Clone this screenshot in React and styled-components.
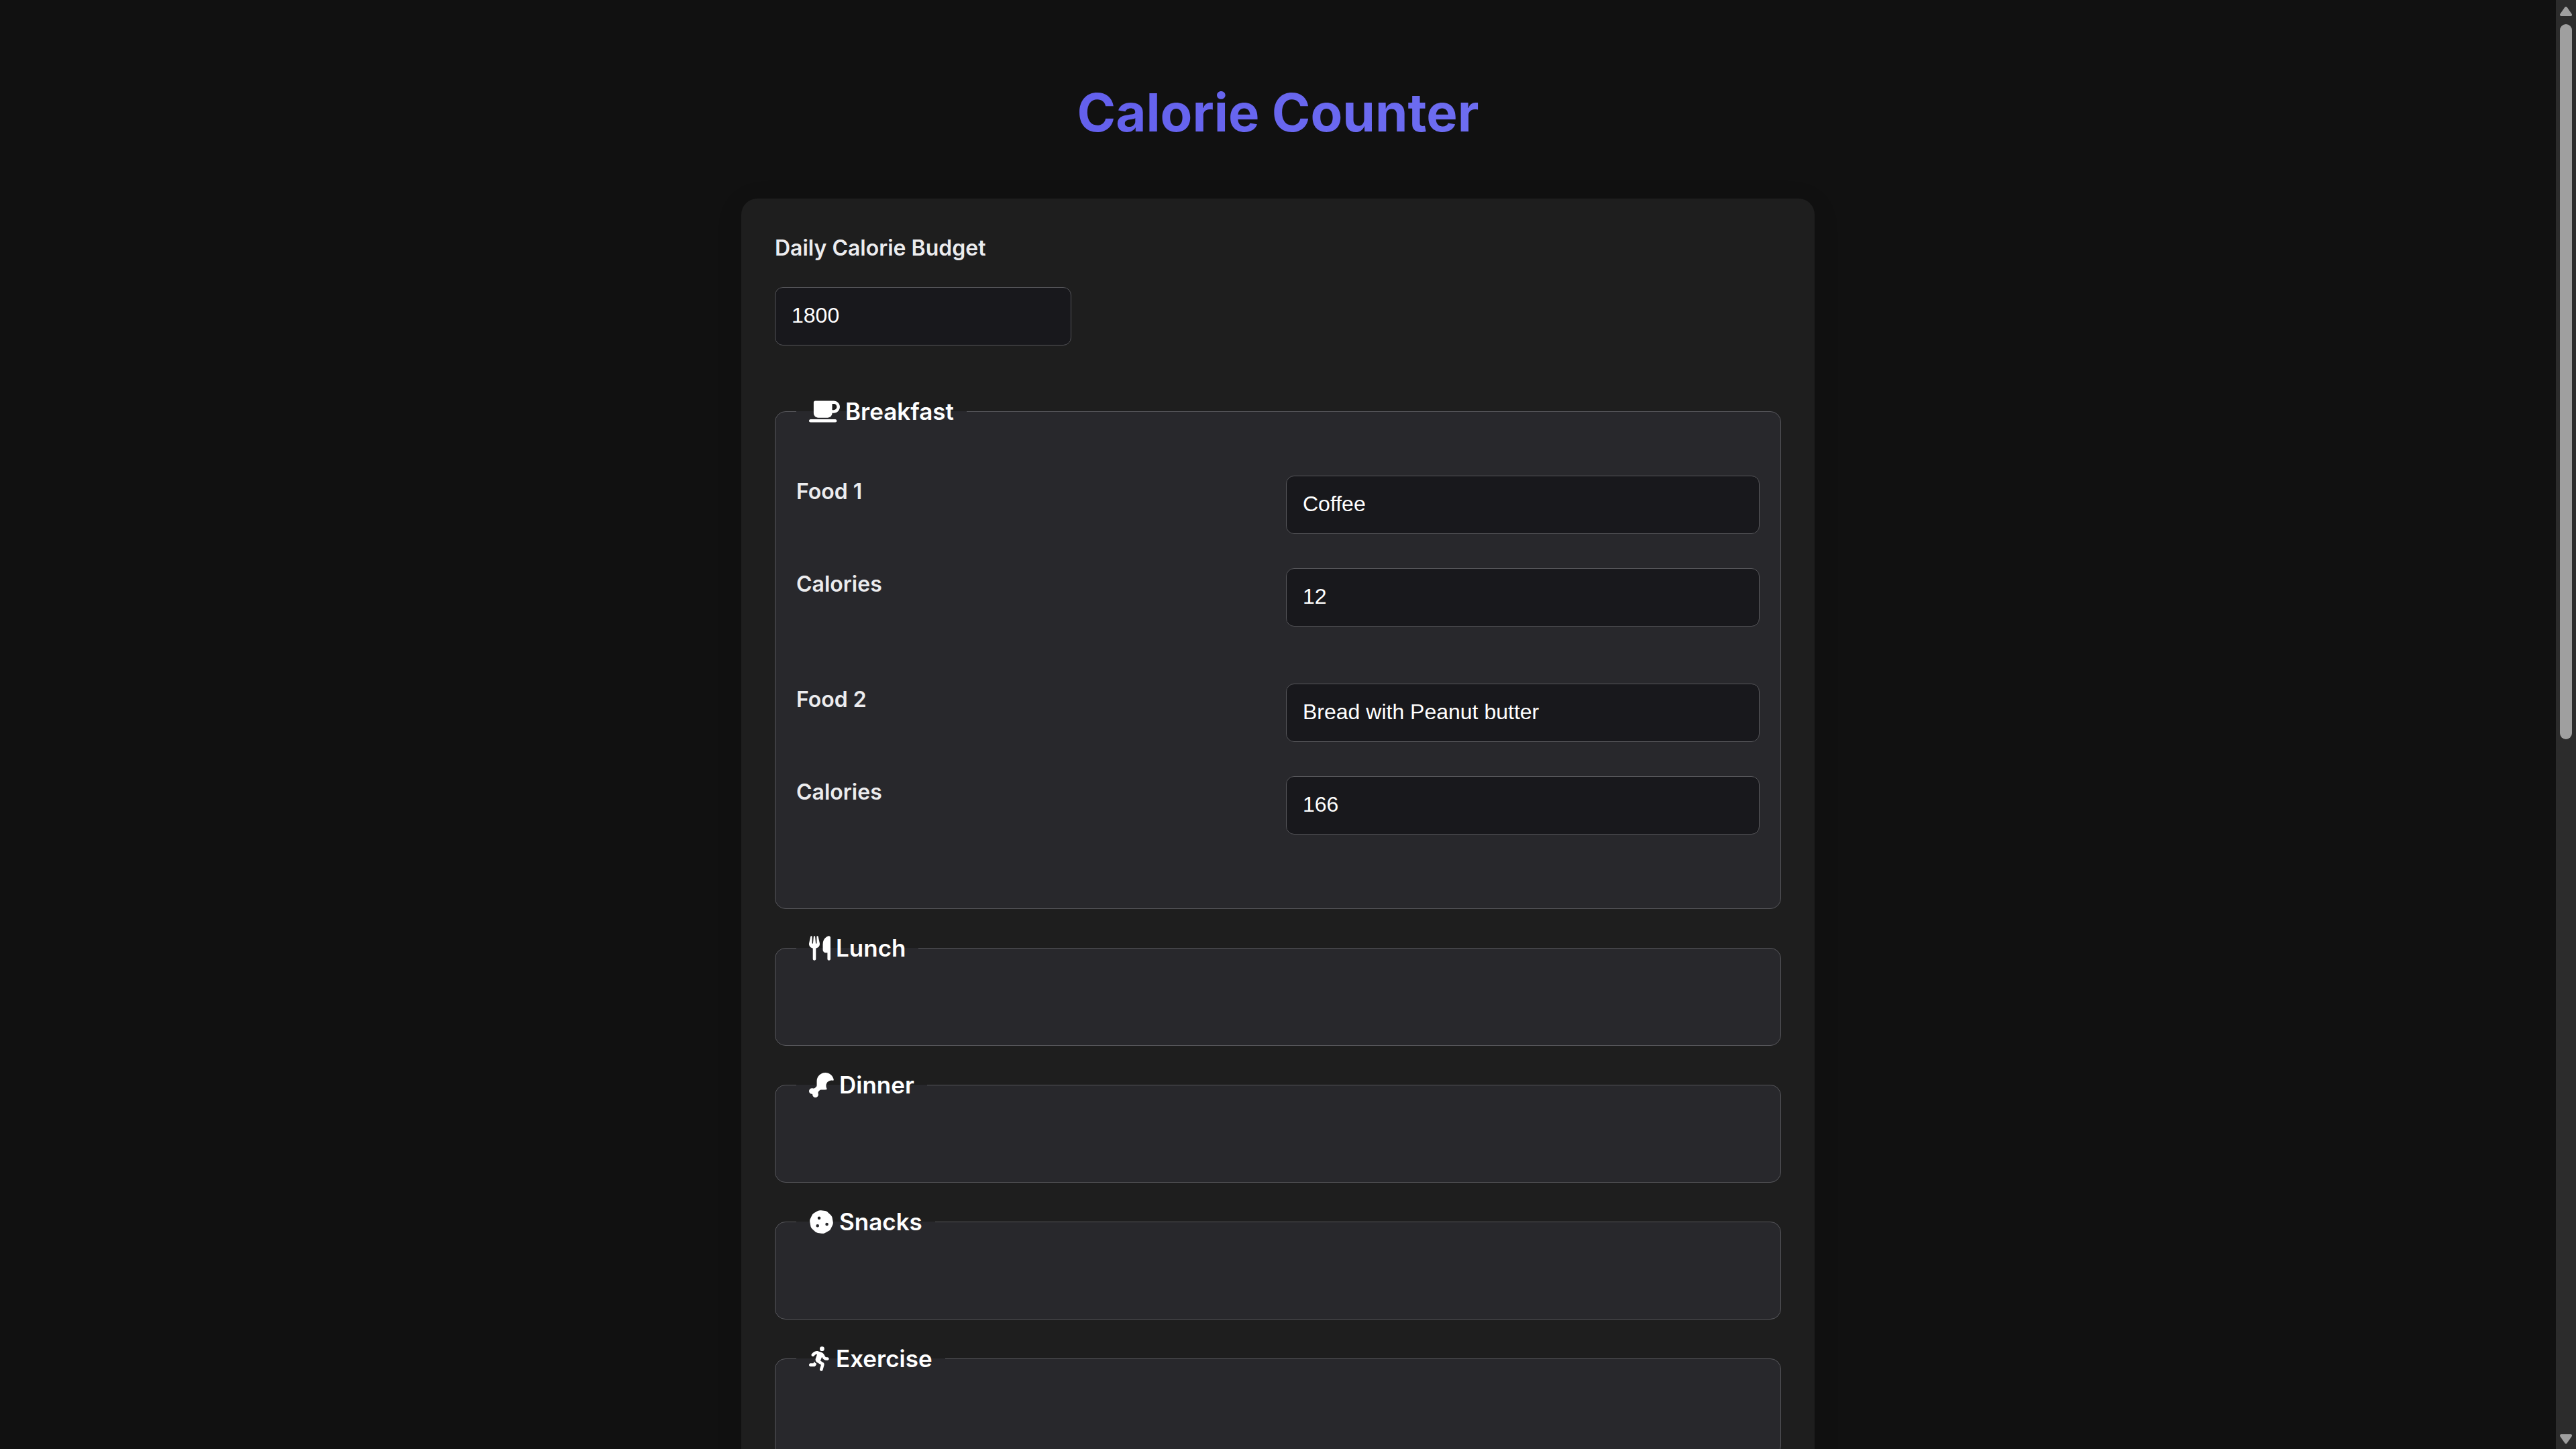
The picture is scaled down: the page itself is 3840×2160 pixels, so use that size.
import React, { useState } from "react";
import styled, { createGlobalStyle } from "styled-components";
import {
  FaMugSaucer,
  FaUtensils,
  FaDrumstickBite,
  FaCookie,
  FaPersonRunning,
} from "react-icons/fa6";

const GlobalStyle = createGlobalStyle`
  *, *::before, *::after { box-sizing: border-box; }
  body {
    margin: 0;
    background: #111111;
    color: #ececee;
    font-family: Inter, "Liberation Sans", sans-serif;
    font-size: 32px;
    line-height: 48px;
  }
`;

const Window = styled.div`
  display: flex;
  height: 100vh;
  overflow: hidden;
`;

const Page = styled.main`
  flex: 1;
  min-width: 0;
  overflow: hidden;
  padding: 104px 32px 0;
`;

const Title = styled.h1`
  max-width: 1600px;
  margin: 0 auto 64px;
  font-size: 78px;
  font-weight: 700;
  line-height: 128px;
  text-align: center;
  color: transparent;
  background: linear-gradient(90deg, #5b55ea, #7678f4);
  background-clip: text;
`;

const Card = styled.form`
  max-width: 1600px;
  margin: 0 auto;
  padding: 50px;
  border-radius: 24px;
  background: #1e1e1e;
  box-shadow: 0 8px 40px rgba(0, 0, 0, 0.1);
`;

const Label = styled.label`
  font-weight: 600;
`;

const Field = styled.input`
  width: 100%;
  height: 87px;
  padding: 0 24px 2px;
  border: 1px solid #56565a;
  border-radius: 12px;
  background: #18181c;
  color: #ffffff;
  font-family: "Liberation Sans", Arial, sans-serif;
  font-size: 32px;
  outline: none;
`;

const Budget = styled.div`
  display: flex;
  flex-direction: column;
  gap: 34px;
  max-width: 442px;
  margin-bottom: 76px;
`;

const Meal = styled.fieldset`
  min-width: 0;
  margin: 0 0 36px;
  padding: 74px 31px 49px;
  border: 1px solid #56565a;
  border-radius: 16px;
  background: #28282c;
`;

const MealName = styled.legend`
  display: flex;
  align-items: center;
  gap: 8px;
  padding: 0 19px;
  color: #ffffff;
  font-size: 35px;
  font-weight: 600;
  line-height: 44px;
`;

const MealIcon = styled.span`
  display: flex;
  width: ${(p) => p.$width}px;
  height: 37px;

  svg {
    width: 100%;
    height: 100%;
  }
`;

const Entries = styled.div`
  display: flex;
  flex-direction: column;
  gap: 24px;
`;

const Entry = styled.div`
  display: grid;
  grid-template-columns: 1fr 1fr;
  gap: 51px 24px;
  padding-bottom: 61px;
`;

const ScrollBar = styled.div`
  display: flex;
  flex-direction: column;
  align-items: center;
  gap: 12px;
  width: 30px;
  padding: 10px 0 8px;
  background: #2c2c2c;
`;

const Track = styled.div`
  flex: 1;
  width: 18px;
`;

const Thumb = styled.div`
  height: 51%;
  border-radius: 9px;
  background: #9f9f9f;
`;

const Arrow = styled.svg`
  display: block;
  width: 18px;
  height: 14px;
  fill: #9f9f9f;
  stroke: #9f9f9f;
  stroke-width: 4;
  stroke-linejoin: round;
`;

const meals = [
  {
    name: "Breakfast",
    Icon: FaMugSaucer,
    iconWidth: 46,
    entries: [
      { food: "Coffee", calories: "12" },
      { food: "Bread with Peanut butter", calories: "166" },
    ],
  },
  { name: "Lunch", Icon: FaUtensils, iconWidth: 32, entries: [] },
  { name: "Dinner", Icon: FaDrumstickBite, iconWidth: 37, entries: [] },
  { name: "Snacks", Icon: FaCookie, iconWidth: 37, entries: [] },
  { name: "Exercise", Icon: FaPersonRunning, iconWidth: 32, entries: [] },
];

function TextField({ id, initial, ...rest }) {
  const [value, setValue] = useState(initial);
  return (
    <Field
      id={id}
      type="text"
      value={value}
      onChange={(e) => setValue(e.target.value)}
      {...rest}
    />
  );
}

function MealSection({ name, Icon, iconWidth, entries }) {
  return (
    <Meal>
      <MealName>
        <MealIcon $width={iconWidth} aria-hidden="true">
          <Icon />
        </MealIcon>
        {name}
      </MealName>
      {entries.length > 0 && (
        <Entries>
          {entries.map(({ food, calories }, i) => {
            const id = `${name.toLowerCase()}-${i + 1}`;
            return (
              <Entry key={id}>
                <Label htmlFor={`${id}-food`}>Food {i + 1}</Label>
                <TextField id={`${id}-food`} initial={food} />
                <Label htmlFor={`${id}-calories`}>Calories</Label>
                <TextField
                  id={`${id}-calories`}
                  initial={calories}
                  inputMode="numeric"
                />
              </Entry>
            );
          })}
        </Entries>
      )}
    </Meal>
  );
}

export default function App() {
  return (
    <>
      <GlobalStyle />
      <Window>
        <Page>
          <Title>Calorie Counter</Title>
          <Card onSubmit={(e) => e.preventDefault()}>
            <Budget>
              <Label htmlFor="budget">Daily Calorie Budget</Label>
              <TextField id="budget" initial="1800" inputMode="numeric" />
            </Budget>
            {meals.map((meal) => (
              <MealSection key={meal.name} {...meal} />
            ))}
          </Card>
        </Page>
        <ScrollBar aria-hidden="true">
          <Arrow viewBox="0 0 18 14">
            <path d="M9 2 L16 12 H2 Z" />
          </Arrow>
          <Track>
            <Thumb />
          </Track>
          <Arrow viewBox="0 0 18 14">
            <path d="M9 12 L16 2 H2 Z" />
          </Arrow>
        </ScrollBar>
      </Window>
    </>
  );
}
